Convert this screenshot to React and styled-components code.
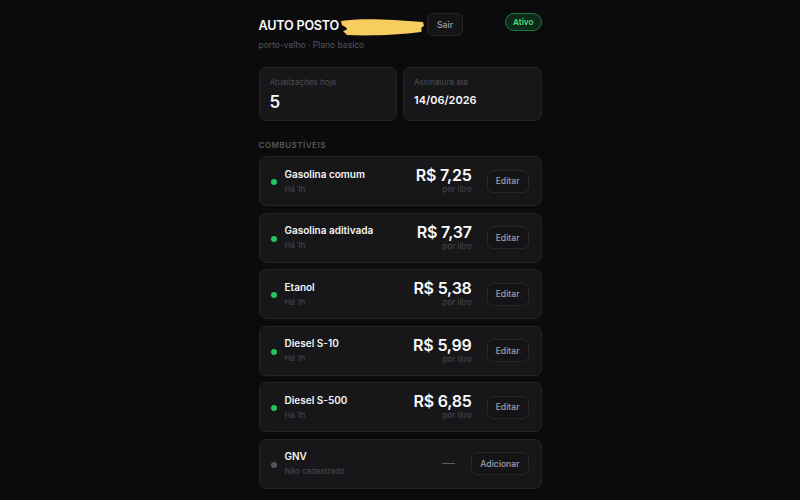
import React from "react";
import styled, { createGlobalStyle } from "styled-components";

const fuels = [
  { name: "Gasolina comum", when: "Há 1h", price: "R$ 7,25", on: true },
  { name: "Gasolina aditivada", when: "Há 1h", price: "R$ 7,37", on: true },
  { name: "Etanol", when: "Há 1h", price: "R$ 5,38", on: true },
  { name: "Diesel S-10", when: "Há 1h", price: "R$ 5,99", on: true },
  { name: "Diesel S-500", when: "Há 1h", price: "R$ 6,85", on: true },
  { name: "GNV", when: "Não cadastrado", price: null, on: false },
];

const App = () => {
  return (
    <>
      <Global />
      <Page>
        <Header>
          <TitleRow>
            <Title>AUTO POSTO</Title>
            <Scribble viewBox="0 0 86 20" width="86" height="20">
              <path
                d="M2 4 C 20 1, 50 2, 84 5 L 85 9 C 80 11, 84 13, 82 15 C 60 18, 30 19, 8 18 L 4 14 C 12 12, 6 10, 3 8 Z"
                fill="#f8cd60"
              />
            </Scribble>
            <SmallButton>Sair</SmallButton>
          </TitleRow>
          <Badge>Ativo</Badge>
        </Header>
        <Sub>porto-velho · Plano basico</Sub>

        <Stats>
          <StatCard>
            <StatLabel>Atualizações hoje</StatLabel>
            <StatValue $big>5</StatValue>
          </StatCard>
          <StatCard>
            <StatLabel>Assinatura até</StatLabel>
            <StatValue>14/06/2026</StatValue>
          </StatCard>
        </Stats>

        <Section>COMBUSTÍVEIS</Section>

        <List>
          {fuels.map((f) => (
            <Row key={f.name}>
              <Dot $on={f.on} />
              <Info>
                <Name>{f.name}</Name>
                <When>{f.when}</When>
              </Info>
              {f.price ? (
                <Price>
                  <Amount>{f.price}</Amount>
                  <Unit>por litro</Unit>
                </Price>
              ) : (
                <Dash />
              )}
              <SmallButton $row>{f.price ? "Editar" : "Adicionar"}</SmallButton>
            </Row>
          ))}
        </List>
      </Page>
    </>
  );
};

export default App;

const Global = createGlobalStyle`
  body {
    margin: 0;
    background: #0b0b0d;
    font-family: Inter, "Liberation Sans", sans-serif;
    color: #f4f4f5;
  }
`;

const Page = styled.div`
  width: 283px;
  margin: 0 auto;
  padding-top: 13px;
`;

const Header = styled.div`
  display: flex;
  justify-content: space-between;
  align-items: flex-start;
`;

const TitleRow = styled.div`
  display: flex;
  align-items: center;
  height: 23px;
`;

const Title = styled.div`
  font-size: 12.6px;
  font-weight: 600;
  letter-spacing: -0.2px;
  color: #fafafa;
  margin-top: 2px;
`;

const Scribble = styled.svg`
  margin-left: 0;
  margin-top: 4px;
`;

const SmallButton = styled.div`
  height: 23px;
  padding: 0 ${(p) => (p.$row ? "8px" : "9px")};
  margin-left: ${(p) => (p.$row ? "14px" : "2px")};
  border: 1px solid #27272b;
  border-radius: 6px;
  box-sizing: border-box;
  display: flex;
  align-items: center;
  font-size: 8.6px;
  font-weight: 500;
  color: #a1a1aa;
  background: #141417;
`;

const Badge = styled.div`
  height: 18px;
  padding: 0 7px;
  border-radius: 9px;
  box-sizing: border-box;
  border: 1px solid #1b7a3e;
  background: #0e2a18;
  color: #4ade80;
  font-size: 8.2px;
  font-weight: 600;
  display: flex;
  align-items: center;
`;

const Sub = styled.div`
  margin-top: 4px;
  font-size: 8.5px;
  color: #55555c;
`;

const Stats = styled.div`
  margin-top: 17px;
  display: grid;
  grid-template-columns: 1fr 1fr;
  gap: 6px;
`;

const StatCard = styled.div`
  height: 54px;
  box-sizing: border-box;
  padding: 9px 10px;
  background: #17171a;
  border: 1px solid #242428;
  border-radius: 7px;
`;

const StatLabel = styled.div`
  font-size: 8px;
  color: #4e4e55;
`;

const StatValue = styled.div`
  margin-top: ${(p) => (p.$big ? "5px" : "6px")};
  font-size: ${(p) => (p.$big ? "17px" : "11px")};
  font-weight: 600;
  color: #fafafa;
`;

const Section = styled.div`
  margin-top: 19px;
  font-size: 8px;
  font-weight: 600;
  letter-spacing: 0.5px;
  color: #56565d;
`;

const List = styled.div`
  margin-top: 6px;
  display: flex;
  flex-direction: column;
  gap: 6.6px;
`;

const Row = styled.div`
  height: 50px;
  box-sizing: border-box;
  padding: 0 12px 0 11px;
  background: #17171a;
  border: 1px solid #242428;
  border-radius: 7px;
  display: flex;
  align-items: center;
`;

const Dot = styled.div`
  width: 6px;
  height: 6px;
  border-radius: 50%;
  background: ${(p) => (p.$on ? "#22c55e" : "#56565c")};
  margin-right: 8px;
  margin-top: 2px;
`;

const Info = styled.div`
  flex: 1;
  display: flex;
  flex-direction: column;
  gap: 4px;
  margin-top: -1px;
`;

const Name = styled.div`
  font-size: 10px;
  font-weight: 600;
  color: #f4f4f5;
`;

const When = styled.div`
  font-size: 8px;
  color: #48484e;
`;

const Price = styled.div`
  display: flex;
  flex-direction: column;
  align-items: flex-end;
  margin-top: -2px;
  margin-right: 1px;
`;

const Amount = styled.div`
  font-size: 16px;
  font-weight: 600;
  letter-spacing: -0.2px;
  color: #fafafa;
  line-height: 19px;
`;

const Unit = styled.div`
  font-size: 8px;
  color: #48484e;
  line-height: 9px;
`;

const Dash = styled.div`
  width: 13px;
  height: 1px;
  background: #5a5a60;
  margin-right: 2px;
`;
